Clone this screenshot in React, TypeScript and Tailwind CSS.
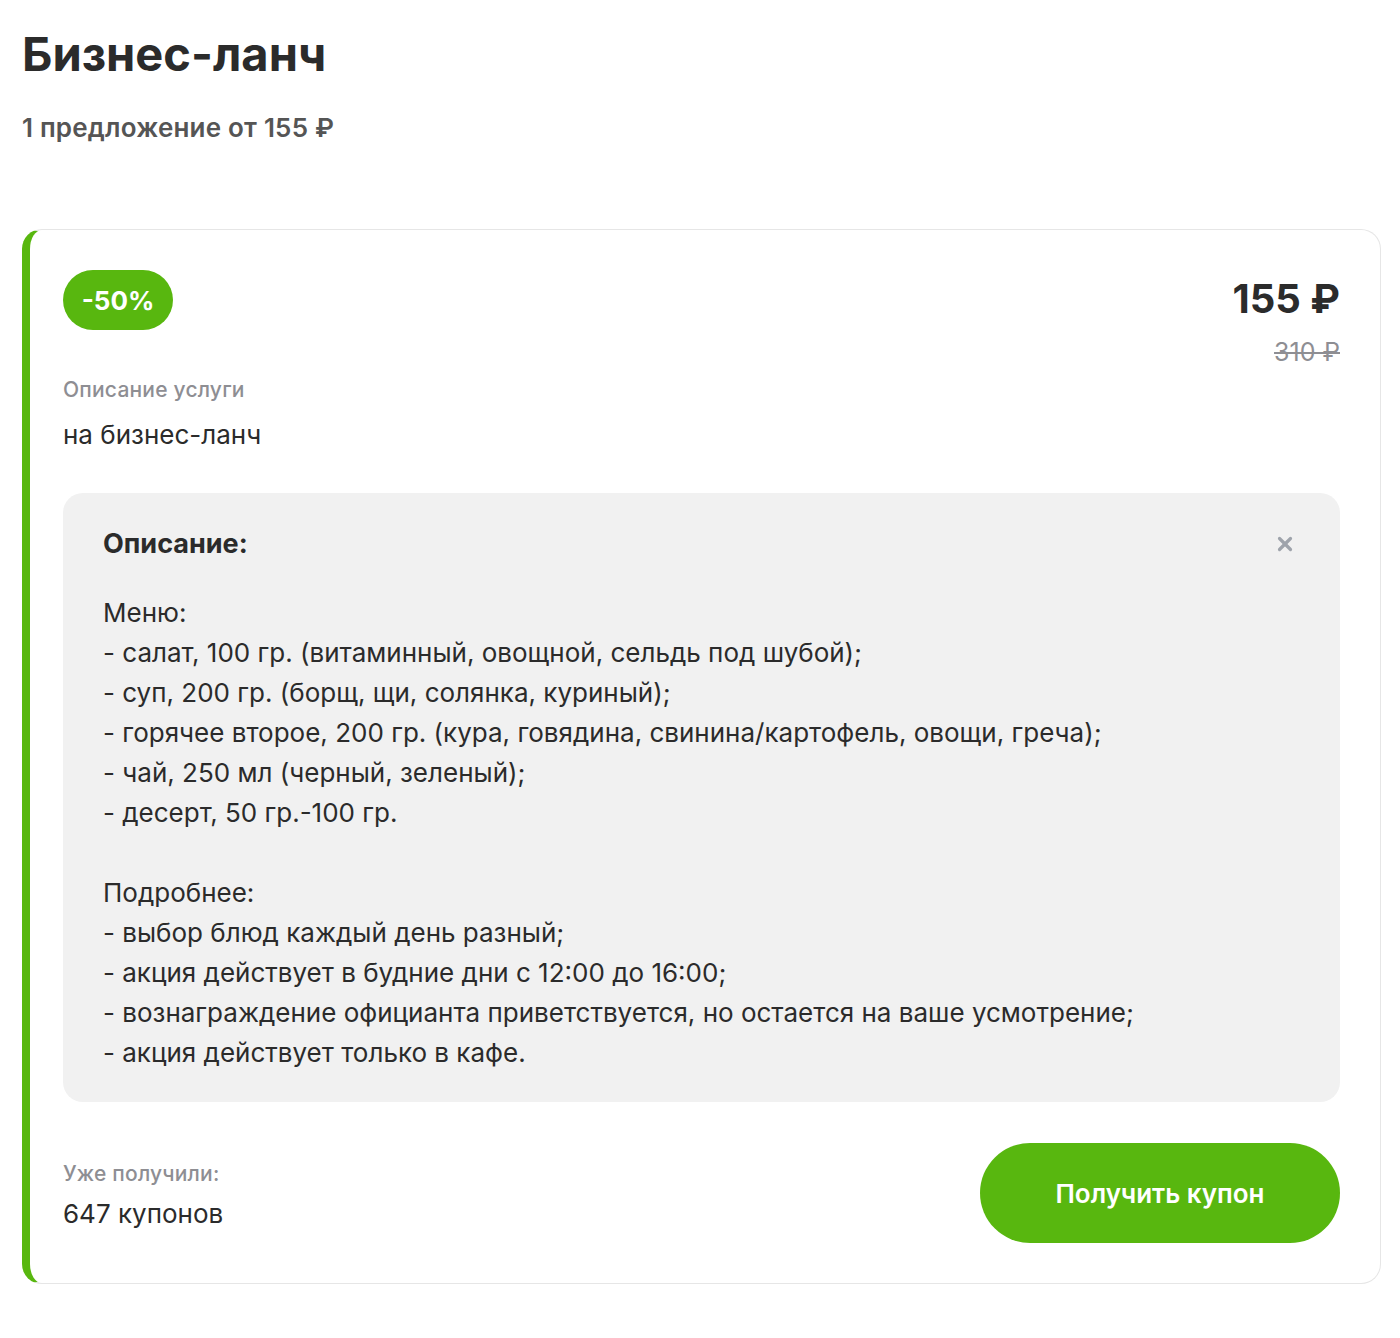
import { X } from "lucide-react";

const menu = `Меню:
- салат, 100 гр. (витаминный, овощной, сельдь под шубой);
- суп, 200 гр. (борщ, щи, солянка, куриный);
- горячее второе, 200 гр. (кура, говядина, свинина/картофель, овощи, греча);
- чай, 250 мл (черный, зеленый);
- десерт, 50 гр.-100 гр.

Подробнее:
- выбор блюд каждый день разный;
- акция действует в будние дни с 12:00 до 16:00;
- вознаграждение официанта приветствуется, но остается на ваше усмотрение;
- акция действует только в кафе.`;

export default function App() {
  return (
    <div
      className="min-h-[1338px] bg-white px-[22px] pt-[24px] text-[#2b2b2b]"
      style={{ fontFamily: "Inter, 'Noto Sans', sans-serif" }}
    >
      <h1 className="text-[47px] font-bold leading-[60px]">Бизнес-ланч</h1>
      <p className="mt-[28px] text-[26px] font-semibold leading-[32px] tracking-[0.2px] text-[#555]">
        1 предложение от 155 ₽
      </p>

      <div className="mt-[85px] w-[1359px] rounded-[20px] border border-[#e6e6e6] border-l-[8px] border-l-[#58b70f] pb-[40px] pl-[33px] pr-[40px] pt-[40px]">
        <div className="flex items-start justify-between">
          <div>
            <div className="flex h-[60px] w-[110px] items-center justify-center rounded-full bg-[#58b70f] text-[26px] font-bold text-white">
              -50%
            </div>
            <div className="mt-[48px] text-[21px] font-medium leading-[24px] tracking-[0.2px] text-[#8e8e93]">
              Описание услуги
            </div>
            <div className="mt-[18px] text-[26px] leading-[30px]">
              на бизнес-ланч
            </div>
          </div>
          <div className="flex flex-col items-end">
            <div className="mt-[6px] text-[40px] font-bold leading-[46px]">
              155 ₽
            </div>
            <div className="mt-[15px] text-[25px] leading-[30px] text-[#8e8e93] line-through">
              310 ₽
            </div>
          </div>
        </div>

        <div className="mt-[43px] rounded-[20px] bg-[#f1f1f1] pb-[29px] pl-[40px] pr-[44px] pt-[37px]">
          <div className="flex items-center justify-between">
            <div className="text-[27px] font-bold leading-[28px]">Описание:</div>
            <X className="h-[22px] w-[22px] text-[#9ea3ab]" strokeWidth={3.5} />
          </div>
          <div className="mt-[35px] whitespace-pre-line text-[26px] leading-[40px]">
            {menu}
          </div>
        </div>

        <div className="mt-[41px] flex items-center justify-between">
          <div className="mt-[4px]">
            <div className="text-[21px] font-medium leading-[24px] tracking-[0.2px] text-[#8e8e93]">
              Уже получили:
            </div>
            <div className="mt-[13px] text-[26px] leading-[30px]">647 купонов</div>
          </div>
          <button className="h-[100px] w-[360px] rounded-full bg-[#58b70f] text-[26px] font-semibold text-white">
            Получить купон
          </button>
        </div>
      </div>
    </div>
  );
}
